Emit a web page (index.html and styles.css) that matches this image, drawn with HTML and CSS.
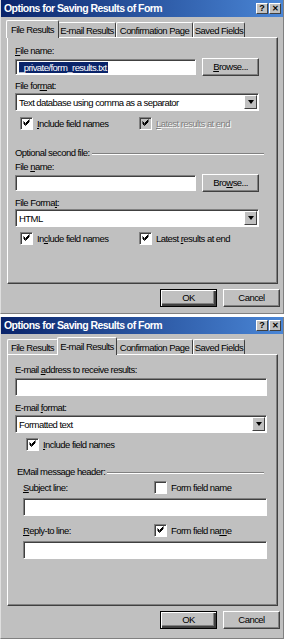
FILE: index.html
```html
<!DOCTYPE html>
<html lang="en">
<head>
    <meta charset="UTF-8">
    <title>Options for Saving Results of Form</title>
    <link rel="stylesheet" href="styles.css">
</head>
<body>
    <!-- File Results tab -->
    <div class="dialog first">
        <div class="titlebar">
            <span class="title">Options for Saving Results of Form</span>
            <span class="tbtn">?</span>
            <span class="tbtn x">&#x2715;</span>
        </div>
        <div class="tabs">
            <span class="tab t1 active">File Results</span>
            <span class="tab t2">E-mail Results</span>
            <span class="tab t3">Confirmation Page</span>
            <span class="tab t4">Saved Fields</span>
        </div>
        <div class="panel">
            <div class="label"><u>F</u>ile name:</div>
            <div class="row">
                <div class="input short"><span class="sel">_private/form_results.txt</span></div>
                <div class="btn browse"><u>B</u>rowse...</div>
            </div>
            <div class="label l2">File for<u>m</u>at:</div>
            <div class="select wide1">
                <span class="value">Text database using comma as a separator</span>
                <span class="arrow"></span>
            </div>
            <div class="checks c1">
                <div class="check on"><span><u>I</u>nclude field names</span></div>
                <div class="check on disabled"><span><u>L</u>atest results at end</span></div>
            </div>
            <div class="group g1"><span>Optional second file:</span><span class="line"></span></div>
            <div class="label l3">File <u>n</u>ame:</div>
            <div class="row">
                <div class="input short"></div>
                <div class="btn browse">Bro<u>w</u>se...</div>
            </div>
            <div class="label l4">File Forma<u>t</u>:</div>
            <div class="select wide1">
                <span class="value">HTML</span>
                <span class="arrow"></span>
            </div>
            <div class="checks c1 c3">
                <div class="check on"><span>In<u>c</u>lude field names</span></div>
                <div class="check on"><span>Latest <u>r</u>esults at end</span></div>
            </div>
        </div>
        <div class="buttons">
            <div class="btn default">OK</div>
            <div class="btn">Cancel</div>
        </div>
    </div>

    <!-- E-mail Results tab -->
    <div class="dialog second">
        <div class="titlebar">
            <span class="title">Options for Saving Results of Form</span>
            <span class="tbtn">?</span>
            <span class="tbtn x">&#x2715;</span>
        </div>
        <div class="tabs">
            <span class="tab t1">File Results</span>
            <span class="tab t2 active">E-mail Results</span>
            <span class="tab t3">Confirmation Page</span>
            <span class="tab t4">Saved Fields</span>
        </div>
        <div class="panel p2">
            <div class="label">E-mail <u>a</u>ddress to receive results:</div>
            <div class="input full"></div>
            <div class="label l2">E-mail <u>f</u>ormat:</div>
            <div class="select wide2">
                <span class="value">Formatted text</span>
                <span class="arrow"></span>
            </div>
            <div class="checks c2">
                <div class="check on"><span><u>I</u>nclude field names</span></div>
            </div>
            <div class="group g2"><span>EMail message header:</span><span class="line"></span></div>
            <div class="sub">
                <div class="subrow">
                    <span class="sublabel"><u>S</u>ubject line:</span>
                    <div class="check"><span>Form field name</span></div>
                </div>
                <div class="input field"></div>
                <div class="subrow">
                    <span class="sublabel"><u>R</u>eply-to line:</span>
                    <div class="check on"><span>Form field na<u>m</u>e</span></div>
                </div>
                <div class="input field"></div>
            </div>
        </div>
        <div class="buttons">
            <div class="btn default">OK</div>
            <div class="btn">Cancel</div>
        </div>
    </div>
</body>
</html>
```

FILE: styles.css
```css
* { box-sizing: border-box; margin: 0; padding: 0; }
body {
    width: 284px;
    background: #fff;
    font-family: "Liberation Sans", Arial, sans-serif;
    font-size: 9.5px;
    letter-spacing: -0.55px;
    line-height: 13px;
    color: #000;
    white-space: nowrap;
}
u { text-decoration: underline; }

.dialog {
    background: #c0c0c0;
    border-left: 1px solid #dfdfdf;
    border-right: 1px solid #808080;
    border-bottom: 1px solid #808080;
    display: flex;
    flex-direction: column;
}
.dialog.first { height: 314px; }
.dialog.second { margin-top: 3px; height: 322px; }

.titlebar {
    height: 17px;
    flex: none;
    background: linear-gradient(to right, #0a246a, #4a86d6);
    display: flex;
    align-items: center;
    padding: 0 2px 0 3px;
}
.title {
    flex: 1;
    color: #fff;
    font-weight: bold;
    font-size: 10.5px;
    letter-spacing: -0.55px;
}
.tbtn {
    width: 12px;
    height: 11px;
    background: #c0c0c0;
    border: 1px solid;
    border-color: #fff #404040 #404040 #fff;
    font-size: 9px;
    line-height: 9px;
    font-weight: bold;
    letter-spacing: 0;
    text-align: center;
}
.tbtn.x { margin-left: 1px; font-size: 8px; }

.tabs {
    display: flex;
    align-items: flex-end;
    height: 18px;
    flex: none;
    margin-top: 2px;
    padding-left: 6px;
}
.tab {
    height: 15px;
    padding-top: 1px;
    text-align: center;
    border: 1px solid;
    border-bottom: none;
    border-color: #fff #404040 #c0c0c0 #fff;
    border-radius: 2px 2px 0 0;
    position: relative;
}
.t1 { width: 51px; }
.t2 { width: 58px; }
.t3 { width: 77px; }
.t4 { width: 52px; }
.tab.active {
    height: 18px;
    padding-top: 2px;
    margin: 0 -1px -1px;
    padding-left: 1px;
    padding-right: 1px;
    z-index: 1;
    background: #c0c0c0;
}
.t1.active { width: 53px; }
.t2.active { width: 60px; }

.panel {
    margin: 0 5px 0 6px;
    height: 247px;
    flex: none;
    border: 1px solid;
    border-color: #fff #404040 #404040 #fff;
    box-shadow: inset -1px -1px 0 #808080;
    padding: 6px 8px 0 7px;
    display: flex;
    flex-direction: column;
}
.panel.p2 { height: 252px; padding-right: 10px; padding-top: 8px; }

.label { height: 13px; }
.l2 { margin-top: 3px; margin-bottom: 1px; }
.l3 { margin-top: 1px; }
.l4 { margin-top: 4px; margin-bottom: 0; }
.p2 .l2 { margin-top: 5px; margin-bottom: 1px; }

.row {
    display: flex;
    align-items: center;
    gap: 6px;
    height: 19px;
}

.input {
    background: #fff;
    height: 16px;
    border: 1px solid;
    border-color: #808080 #fff #fff #808080;
    box-shadow: inset 1px 1px 0 #404040;
    padding: 1px 3px;
}
.input.short { width: 181px; }
.input.full { height: 18px; margin-top: 2px; }
.sel { background: #0a246a; color: #fff; padding-right: 1px; }

.btn {
    background: #c0c0c0;
    border: 1px solid;
    border-color: #fff #404040 #404040 #fff;
    box-shadow: inset -1px -1px 0 #808080;
    text-align: center;
    height: 18px;
    line-height: 15px;
}
.btn.browse { width: 57px; }

.select {
    background: #fff;
    height: 18px;
    border: 1px solid;
    border-color: #808080 #fff #fff #808080;
    box-shadow: inset 1px 1px 0 #404040;
    display: flex;
    align-items: center;
    padding: 0 1px 0 3px;
}
.select .value { flex: 1; }
.select.wide1 { width: 244px; }
.arrow {
    width: 13px;
    height: 14px;
    background: #c0c0c0;
    border: 1px solid;
    border-color: #fff #404040 #404040 #fff;
    position: relative;
}
.arrow::after {
    content: "";
    position: absolute;
    left: 3px;
    top: 4px;
    border-left: 3px solid transparent;
    border-right: 3px solid transparent;
    border-top: 4px solid #000;
}

.checks {
    display: flex;
    height: 13px;
    margin-top: 6px;
}
.c1 { padding-left: 5px; }
.c1 .check:first-child { width: 119px; }
.c3 { margin-top: 5px; }
.c2 { padding-left: 11px; margin-top: 5px; }
.check {
    display: flex;
    align-items: center;
    gap: 4px;
}
.check::before {
    content: "";
    width: 11px;
    height: 11px;
    background: #fff;
    border: 1px solid;
    border-color: #808080 #fff #fff #808080;
    box-shadow: inset 1px 1px 0 #404040;
    flex: none;
}
.check.on::before {
    background: #fff url("data:image/svg+xml,%3Csvg xmlns='http://www.w3.org/2000/svg' width='11' height='11'%3E%3Cpath d='M2.5 3.5l2 2 4-4M2.5 4.5l2 2 4-4M2.5 5.5l2 2 4-4' stroke='%23000' fill='none'/%3E%3C/svg%3E") no-repeat;
}
.check.disabled { color: #808080; text-shadow: 1px 1px 0 #fff; }
.check.disabled::before { background-color: #c0c0c0; }

.group {
    display: flex;
    align-items: center;
    gap: 2px;
    height: 13px;
}
.g1 { margin-top: 16px; }
.g2 { margin-top: 14px; padding-left: 2px; padding-right: 3px; }
.group .line {
    flex: 1;
    height: 2px;
    border-top: 1px solid #808080;
    border-bottom: 1px solid #fff;
    margin-top: 2px;
}
.g1 .line { margin-right: 5px; }

.sub { padding-left: 8px; display: flex; flex-direction: column; }
.subrow {
    display: flex;
    align-items: center;
    height: 13px;
    margin-top: 3px;
}
.sublabel { width: 131px; }
.input.field { height: 18px; margin-top: 4px; }
.subrow:nth-child(3) { margin-top: 8px; }

.buttons {
    display: flex;
    justify-content: flex-end;
    gap: 6px;
    padding: 5px 3px 0 0;
}
.buttons .btn { width: 57px; }
.btn.default {
    border-color: #000;
    box-shadow: inset 1px 1px 0 #fff, inset -2px -2px 0 #404040, inset -3px -3px 0 #808080;
}
```
